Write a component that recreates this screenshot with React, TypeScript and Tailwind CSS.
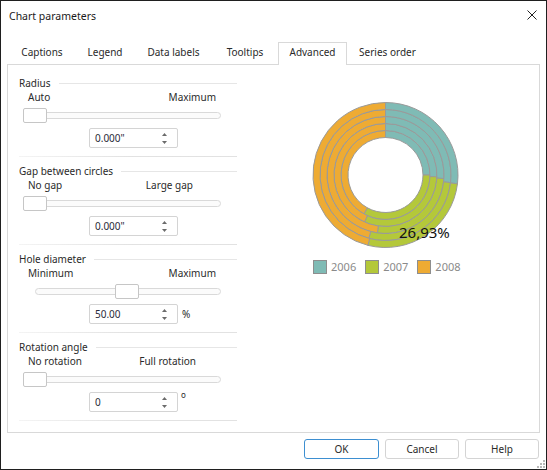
import React from 'react';

const TABS = [
  { label: 'Captions', w: 'w-[66px]' },
  { label: 'Legend', w: 'w-[60px]' },
  { label: 'Data labels', w: 'w-[77px]' },
  { label: 'Tooltips', w: 'w-[66px]' },
  { label: 'Advanced', w: 'w-[69px]', active: true },
  { label: 'Series order', w: 'w-[81px]' },
];

const SECTIONS = [
  { title: 'Radius', left: 'Auto', right: 'Maximum', rightPad: 'pr-[21px]', track: 'ml-[4px] w-[198px]', thumb: 'left-0', value: '0.000"', unit: '' },
  { title: 'Gap between circles', left: 'No gap', right: 'Large gap', rightPad: 'pr-[44px]', track: 'ml-[4px] w-[198px]', thumb: 'left-0', value: '0.000"', unit: '' },
  { title: 'Hole diameter', left: 'Minimum', right: 'Maximum', rightPad: 'pr-[21px]', track: 'ml-[16px] w-[186px]', thumb: 'left-[80px]', value: '50.00', unit: '%' },
  { title: 'Rotation angle', left: 'No rotation', right: 'Full rotation', rightPad: 'pr-[41px]', track: 'ml-[4px] w-[198px]', thumb: 'left-0', value: '0', unit: 'deg' },
];

// end angles (deg, clockwise from top) of 2006 and 2007 for each ring, inner -> outer
const RINGS = [
  [90, 209],
  [92, 204],
  [93.5, 188],
  [96.7, 194.7],
  [97, 194],
];
const COLORS = ['#7fbbb5', '#b4c83a', '#eeab33'];

const CX = 75.5;
const CY = 75;

function pt(r: number, a: number) {
  const rad = (a * Math.PI) / 180;
  return `${(CX + r * Math.sin(rad)).toFixed(2)} ${(CY - r * Math.cos(rad)).toFixed(2)}`;
}

function sector(r0: number, r1: number, a0: number, a1: number) {
  const large = a1 - a0 > 180 ? 1 : 0;
  return `M ${pt(r1, a0)} A ${r1} ${r1} 0 ${large} 1 ${pt(r1, a1)} L ${pt(r0, a1)} A ${r0} ${r0} 0 ${large} 0 ${pt(r0, a0)} Z`;
}

function SpinArrows() {
  return (
    <svg width="5" height="11" viewBox="0 0 5 11" className="mr-[10px]">
      <polygon points="0,3 5,3 2.5,0" fill="#6b6b6b" />
      <polygon points="0,8 5,8 2.5,11" fill="#6b6b6b" />
    </svg>
  );
}

function Section({ s }: { s: (typeof SECTIONS)[number] }) {
  return (
    <div className="flex h-[88px] flex-col">
      <div className="flex h-[14px] items-center gap-[8px]">
        <span className="leading-[14px]">{s.title}</span>
        <div className="h-px flex-1 bg-[#e6e6e6]" />
      </div>
      <div className={`flex h-[14px] items-center justify-between pl-[9px] leading-[14px] ${s.rightPad}`}>
        <span>{s.left}</span>
        <span>{s.right}</span>
      </div>
      <div className={`relative mt-[4px] h-[15px] ${s.track}`}>
        <div className="mt-[4px] h-[7px] rounded-[4px] border border-[#d9d9d9] bg-[#fbfbfb]" />
        <div className={`absolute top-0 h-[15px] w-[24px] rounded-[2px] border border-[#c6c6c6] bg-white ${s.thumb}`} />
      </div>
      <div className="ml-[70px] mt-[5px] flex h-[20px] items-center">
        <div className="flex h-[20px] w-[89px] items-center justify-between rounded-[2px] border border-[#d4d4d4] bg-white pl-[5px]">
          <span className="leading-[14px] text-[#2b2b3a]">{s.value}</span>
          <SpinArrows />
        </div>
        {s.unit === '%' && <span className="ml-[4px] leading-[14px]">%</span>}
        {s.unit === 'deg' && <span className="ml-[3px] -mt-[14px] text-[8px] leading-[8px]">o</span>}
      </div>
      <div className="mt-[8px] h-px bg-linear-to-r from-[#f4f4f4] via-[#e2e2e2] to-[#e2e2e2]" />
    </div>
  );
}

function Donut() {
  const radii = [37.5, 44.5, 51.5, 58.5, 65.5, 72.5];
  return (
    <svg width="151" height="150" viewBox="0 0 151 150">
      {RINGS.map(([a, b], i) => {
        const r0 = radii[i];
        const r1 = radii[i + 1];
        const segs = [
          [0, a],
          [a, b],
          [b, 360],
        ];
        return segs.map(([s, e], j) => (
          <path key={`${i}-${j}`} d={sector(r0, r1, s, e)} fill={COLORS[j]} stroke="#9a9a9a" strokeWidth="1" />
        ));
      })}
      <text x="89" y="138" fontSize="15" fill="#111" fontFamily="'Noto Sans', sans-serif">
        26,93%
      </text>
    </svg>
  );
}

export default function App() {
  return (
    <div className="relative flex h-[470px] w-[547px] flex-col border border-[#1f1f1f] bg-white font-['Noto_Sans',sans-serif] text-[10px] text-[#2a2a2a]">
      {/* Title bar */}
      <div className="flex h-[41px] items-start justify-between">
        <span className="ml-[8px] mt-[7px] text-[10.5px] leading-[16px] text-[#1a1a1a]">Chart parameters</span>
        <svg width="10" height="10" viewBox="0 0 10 10" className="mr-[9px] mt-[9px]">
          <path d="M0.5 0.5 L9.5 9.5 M9.5 0.5 L0.5 9.5" stroke="#222" strokeWidth="1" />
        </svg>
      </div>

      {/* Tabs */}
      <div className="relative z-10 ml-[8px] flex h-[23px] items-end">
        {TABS.map((t) =>
          t.active ? (
            <div
              key={t.label}
              className={`flex h-[23px] items-center justify-center border-x border-t border-[#d9d9d9] bg-white pb-[3px] ${t.w}`}
            >
              {t.label}
            </div>
          ) : (
            <div key={t.label} className={`flex h-[23px] items-center justify-center pb-[3px] ${t.w}`}>
              {t.label}
            </div>
          )
        )}
      </div>

      {/* Panel */}
      <div className="mx-[6px] -mt-px flex h-[369px] border border-[#d9d9d9]">
        <div className="w-[229px] pl-[11px] pt-[11px]">
          {SECTIONS.map((s) => (
            <Section key={s.title} s={s} />
          ))}
        </div>
        <div className="flex flex-col pl-[73px] pt-[35px]">
          <Donut />
          <div className="ml-[3px] mt-[10px] flex items-center text-[11px] leading-[14px] text-[#8a8a8a]">
            {['2006', '2007', '2008'].map((y, i) => (
              <div key={y} className="mr-[9px] flex items-center gap-[4px]">
                <div
                  className={`h-[14px] w-[14px] border border-[#8e8e8e] ${
                    i === 0 ? 'bg-[#7fbbb5]' : i === 1 ? 'bg-[#b4c83a]' : 'bg-[#eeab33]'
                  }`}
                />
                <span>{y}</span>
              </div>
            ))}
          </div>
        </div>
      </div>

      {/* Buttons */}
      <div className="flex justify-end gap-[6px] pr-[7px] pt-[6px]">
        <button className="h-[20px] w-[75px] rounded-[3px] border border-[#3d8fd1] bg-white leading-[14px] text-[#2a2a2a]">OK</button>
        <button className="h-[20px] w-[74px] rounded-[3px] border border-[#d4d4d4] bg-white leading-[14px] text-[#2a2a2a]">Cancel</button>
        <button className="h-[20px] w-[74px] rounded-[3px] border border-[#d4d4d4] bg-white leading-[14px] text-[#2a2a2a]">Help</button>
      </div>

      {/* Resize grip */}
      <svg width="8" height="8" viewBox="0 0 8 8" className="absolute bottom-[1px] right-[1px]">
        <rect x="6" y="0" width="2" height="2" fill="#b8b8b8" />
        <rect x="3" y="3" width="2" height="2" fill="#b8b8b8" />
        <rect x="6" y="3" width="2" height="2" fill="#b8b8b8" />
        <rect x="0" y="6" width="2" height="2" fill="#b8b8b8" />
        <rect x="3" y="6" width="2" height="2" fill="#b8b8b8" />
        <rect x="6" y="6" width="2" height="2" fill="#b8b8b8" />
      </svg>
    </div>
  );
}
